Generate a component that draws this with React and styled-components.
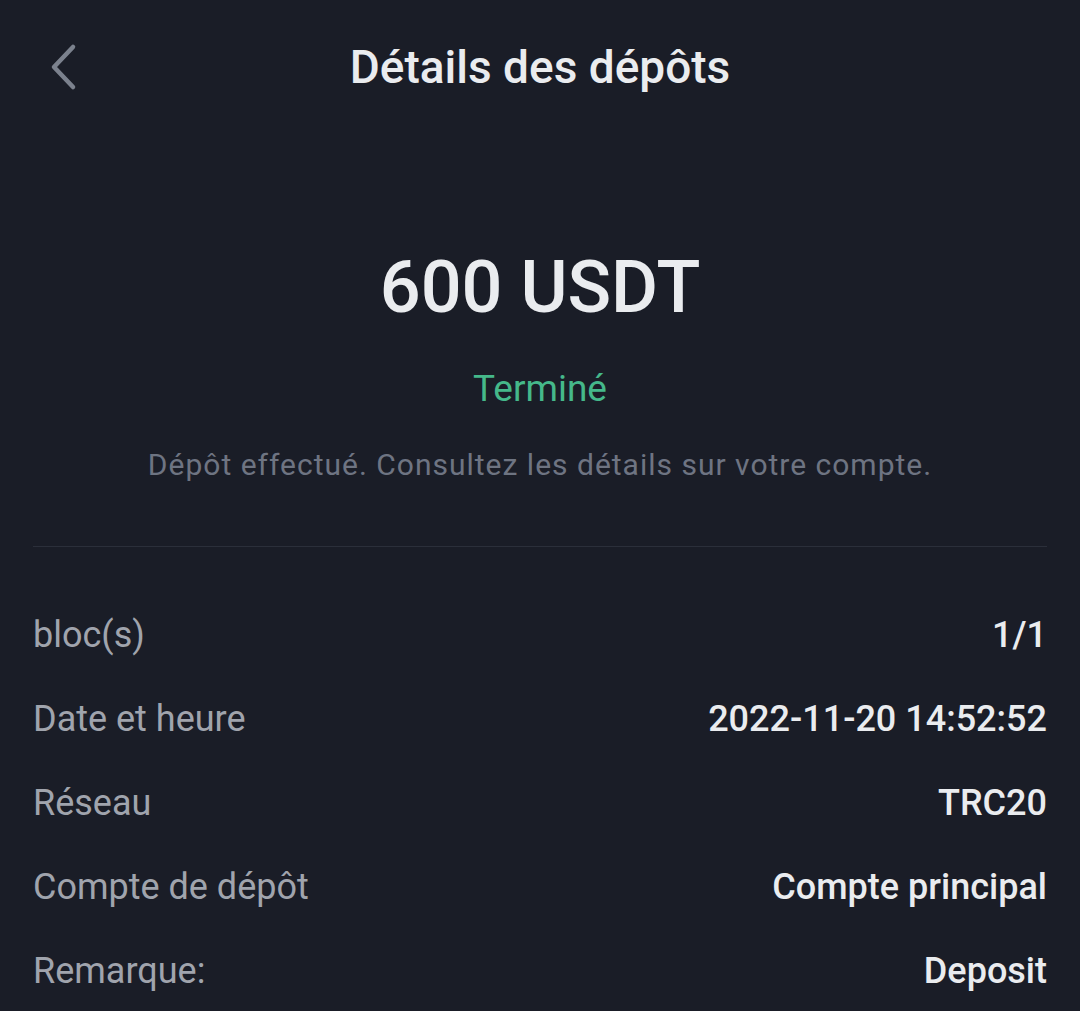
import React from 'react'
import styled, { createGlobalStyle } from 'styled-components'

const GlobalStyle = createGlobalStyle`
    html, body {
        margin: 0;
        padding: 0;
        background: #1a1d27;
    }
    body {
        font-family: Roboto, "Noto Sans", "Liberation Sans", sans-serif;
        -webkit-font-smoothing: antialiased;
    }
`

const Page = styled.div`
    width: 1080px;
    height: 1011px;
    overflow: hidden;
    background: #1a1d27;
    padding: 0 33px;
    box-sizing: border-box;
`

const Header = styled.div`
    position: relative;
    height: 134px;
    display: flex;
    align-items: center;
    justify-content: center;
`

const BackButton = styled.button`
    position: absolute;
    left: 10px;
    top: 40px;
    width: 40px;
    height: 54px;
    padding: 0;
    border: none;
    background: none;
    display: flex;
    align-items: center;
    justify-content: center;
`

const Title = styled.h1`
    margin: 0;
    font-size: 46px;
    font-weight: 500;
    line-height: 134px;
    color: #eaecef;
`

const Hero = styled.div`
    margin-top: 109px;
    display: flex;
    flex-direction: column;
    align-items: center;
`

const Amount = styled.div`
    font-size: 72px;
    font-weight: 500;
    line-height: 90px;
    color: #eaecef;
`

const Status = styled.div`
    margin-top: 31px;
    font-size: 37px;
    line-height: 50px;
    color: #45b88a;
`

const Note = styled.div`
    margin-top: 31px;
    font-size: 30px;
    line-height: 40px;
    letter-spacing: 1px;
    color: #6e7482;
`

const Divider = styled.hr`
    margin: 61px 0 0;
    border: none;
    height: 1px;
    background: #2b2f3a;
`

const List = styled.div`
    padding-top: 46px;
    display: flex;
    flex-direction: column;
`

const Row = styled.div`
    height: 84px;
    display: flex;
    align-items: center;
    justify-content: space-between;
    font-size: 36px;
`

const Label = styled.span`
    color: #a0a4ad;
`

const Value = styled.span`
    color: #eaecef;
    font-weight: 500;
`

const details = [
    ['bloc(s)', '1/1'],
    ['Date et heure', '2022-11-20 14:52:52'],
    ['Réseau', 'TRC20'],
    ['Compte de dépôt', 'Compte principal'],
    ['Remarque:', 'Deposit'],
]

export default function App() {
    return (
        <>
            <GlobalStyle />
            <Page>
                <Header>
                    <BackButton aria-label="Retour">
                        <svg width="30" height="50" viewBox="0 0 30 50">
                            <polyline
                                points="25,5 6,25 25,45"
                                fill="none"
                                stroke="#7b818d"
                                strokeWidth="4.5"
                                strokeLinecap="round"
                                strokeLinejoin="round"
                            />
                        </svg>
                    </BackButton>
                    <Title>Détails des dépôts</Title>
                </Header>
                <Hero>
                    <Amount>600 USDT</Amount>
                    <Status>Terminé</Status>
                    <Note>Dépôt effectué. Consultez les détails sur votre compte.</Note>
                </Hero>
                <Divider />
                <List>
                    {details.map(([label, value]) => (
                        <Row key={label}>
                            <Label>{label}</Label>
                            <Value>{value}</Value>
                        </Row>
                    ))}
                </List>
            </Page>
        </>
    )
}
